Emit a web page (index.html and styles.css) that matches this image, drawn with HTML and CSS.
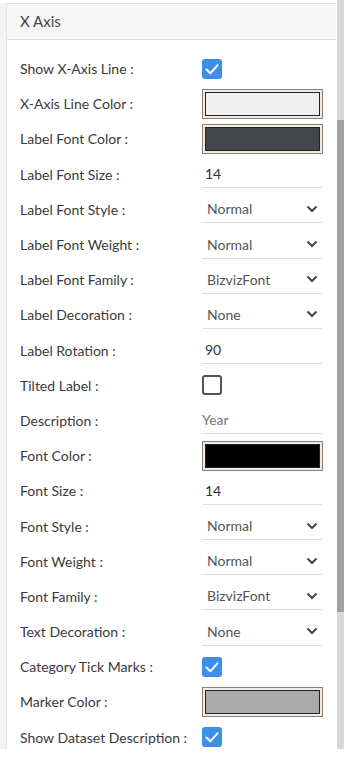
FILE: index.html
```html
<!DOCTYPE html>
<html lang="en">
<head>
    <meta charset="UTF-8">
    <meta name="viewport" content="width=device-width, initial-scale=1.0">
    <title>X Axis</title>
    <link rel="stylesheet" href="styles.css">
</head>
<body>
<div class="frame">
    <div class="gutter"></div>
    <div class="panel">
        <div class="panel-head">X Axis</div>
        <div class="panel-body">
            <div class="row"><span class="label">Show X-Axis Line :</span><span class="check on"><svg viewBox="0 0 20 20"><path d="M4.5 10.5l3.8 3.8 7.2-8"/></svg></span></div>
            <div class="row"><span class="label">X-Axis Line Color :</span><span class="swatch"><span class="swatch-fill" style="background:#eff0ef"></span></span></div>
            <div class="row"><span class="label">Label Font Color :</span><span class="swatch"><span class="swatch-fill" style="background:#45464a"></span></span></div>
            <div class="row"><span class="label">Label Font Size :</span><span class="field">14</span></div>
            <div class="row"><span class="label">Label Font Style :</span><span class="select">Normal<svg viewBox="0 0 12 8"><path d="M1.5 1.5l4.5 4.5 4.5-4.5"/></svg></span></div>
            <div class="row"><span class="label">Label Font Weight :</span><span class="select">Normal<svg viewBox="0 0 12 8"><path d="M1.5 1.5l4.5 4.5 4.5-4.5"/></svg></span></div>
            <div class="row"><span class="label">Label Font Family :</span><span class="select">BizvizFont<svg viewBox="0 0 12 8"><path d="M1.5 1.5l4.5 4.5 4.5-4.5"/></svg></span></div>
            <div class="row"><span class="label">Label Decoration :</span><span class="select">None<svg viewBox="0 0 12 8"><path d="M1.5 1.5l4.5 4.5 4.5-4.5"/></svg></span></div>
            <div class="row"><span class="label">Label Rotation :</span><span class="field">90</span></div>
            <div class="row"><span class="label">Tilted Label :</span><span class="check"></span></div>
            <div class="row"><span class="label">Description :</span><span class="field muted">Year</span></div>
            <div class="row"><span class="label">Font Color :</span><span class="swatch"><span class="swatch-fill" style="background:#000"></span></span></div>
            <div class="row"><span class="label">Font Size :</span><span class="field">14</span></div>
            <div class="row"><span class="label">Font Style :</span><span class="select">Normal<svg viewBox="0 0 12 8"><path d="M1.5 1.5l4.5 4.5 4.5-4.5"/></svg></span></div>
            <div class="row"><span class="label">Font Weight :</span><span class="select">Normal<svg viewBox="0 0 12 8"><path d="M1.5 1.5l4.5 4.5 4.5-4.5"/></svg></span></div>
            <div class="row"><span class="label">Font Family :</span><span class="select">BizvizFont<svg viewBox="0 0 12 8"><path d="M1.5 1.5l4.5 4.5 4.5-4.5"/></svg></span></div>
            <div class="row"><span class="label">Text Decoration :</span><span class="select">None<svg viewBox="0 0 12 8"><path d="M1.5 1.5l4.5 4.5 4.5-4.5"/></svg></span></div>
            <div class="row"><span class="label">Category Tick Marks :</span><span class="check on"><svg viewBox="0 0 20 20"><path d="M4.5 10.5l3.8 3.8 7.2-8"/></svg></span></div>
            <div class="row"><span class="label">Marker Color :</span><span class="swatch"><span class="swatch-fill" style="background:#aaaaab"></span></span></div>
            <div class="row"><span class="label">Show Dataset Description :</span><span class="check on"><svg viewBox="0 0 20 20"><path d="M4.5 10.5l3.8 3.8 7.2-8"/></svg></span></div>
        </div>
    </div>
    <div class="scroll"><div class="thumb"></div></div>
</div>
</body>
</html>
```

FILE: styles.css
```css
html, body { margin: 0; padding: 0; }
body { font-family: Lato, "Open Sans", sans-serif; color: #3b3b3b; background: #fff; width: 344px; height: 760px; overflow: hidden; }
.frame { display: flex; height: 746px; padding-top: 3px; }
.gutter { width: 6px; background: #f3f3f3; border-right: 1px solid #e6e6e6; }
.panel { flex: 1; border-top: 1px solid #dcdcdc; overflow: hidden; }
.panel-head { height: 36px; line-height: 34px; padding-left: 13px; font-size: 15px; color: #444; background: #f7f7f7; border-bottom: 1px solid #dddddd; box-sizing: border-box; }
.panel-body { padding-top: 11px; }
.row { display: flex; align-items: center; height: 35.2px; padding-left: 13px; }
.label { width: 182px; font-size: 14px; color: #3a3a3a; white-space: nowrap; }
.check { width: 20px; height: 20px; box-sizing: border-box; border: 2px solid #555; border-radius: 3px; }
.check.on { background: #3b8fe9; border: none; }
.check svg { width: 20px; height: 20px; display: block; fill: none; stroke: #fff; stroke-width: 2; stroke-linecap: round; stroke-linejoin: round; }
.swatch { width: 121px; height: 30px; box-sizing: border-box; border: 1px solid #8c7d6e; background: #f0ede9; padding: 2px; }
.swatch-fill { display: block; height: 100%; box-sizing: border-box; border: 1px solid #222; }
.field, .select { width: 121px; height: 28px; box-sizing: border-box; border-bottom: 1px solid #dedede; font-size: 14px; line-height: 27px; padding-left: 3px; color: #333; }
.field.muted { color: #777; padding-left: 0; }
.select { display: flex; justify-content: space-between; align-items: center; padding-left: 5px; padding-right: 5px; color: #555; line-height: normal; }
.select svg { width: 12px; height: 8px; fill: none; stroke: #444; stroke-width: 2; }
.scroll { width: 7px; margin-left: 1px; background: #d8d8d8; margin-top: -3px; }
.thumb { margin-top: 120px; height: 492px; background: #a2a2a2; }
```
